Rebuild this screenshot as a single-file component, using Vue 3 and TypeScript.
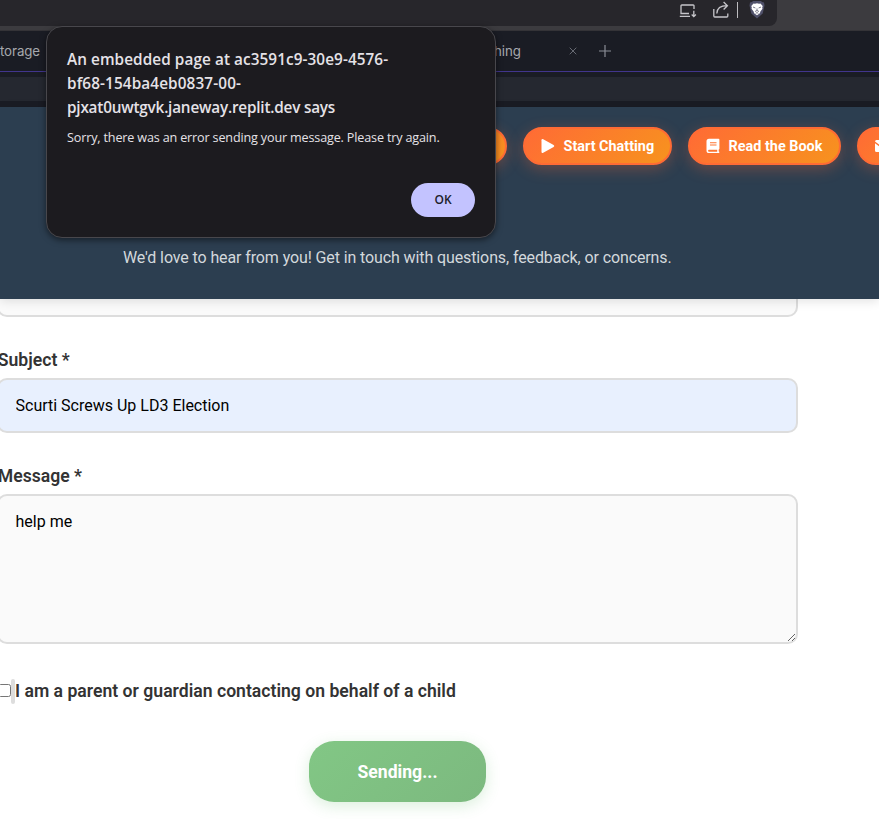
<script setup lang="ts">
import { ref } from 'vue'

const subject = ref('Scurti Screws Up LD3 Election')
const message = ref('help me')
const isParent = ref(false)
const titleLines: string[] = [
  'An embedded page at ac3591c9-30e9-4576-',
  'bf68-154ba4eb0837-00-',
  'pjxat0uwtgvk.janeway.replit.dev says',
]
</script>

<template>
  <div class="window">
    <div class="browser-bar">
      <div class="address">
        <svg class="install" width="18" height="16" viewBox="0 0 18 16" fill="none" stroke="#c6c5ca" stroke-width="1.3">
          <path d="M15 6V2.8Q15 2 14.2 2H2.8Q2 2 2 2.8V10.5H10M.8 13.3H11M14.8 7.8v5.8M12.7 11.5l2.1 2.1 2.1-2.1" />
        </svg>
        <svg class="share" width="18" height="18" viewBox="0 0 18 18" fill="none" stroke="#c6c5ca" stroke-width="1.3">
          <path d="M1.8 8v7q0 1 1 1h12q1 0 1-1v-2.5M4.8 12.5C5 7.5 8 4.7 15 4.7M11.6 1l3.8 3.7-3.8 3.8" />
        </svg>
        <span class="divider"></span>
        <svg class="lion" width="16" height="18" viewBox="0 0 16 18">
          <path fill="#50516a" d="M4 0h8l1 1 2 .5.5 3-1.8 8L8 17.6l-5.700-5.1L.5 4.500 1 1.500 3 1z" />
          <path fill="#fff" d="M4.500 2.400L6 2.800l2-.5 2 .5 1.500-.4L13.700 5l-.5 1.700.3 1.100-2.100 2.700-.5 1.800L8 14.200 5.100 12.300l-.5-1.800-2.100-2.700.3-1.100L2.300 5z" />
          <path fill="none" stroke="#55566b" stroke-width=".8" d="M4 6l2.400 1M12 6L9.600 7M8 7.500v2M6 10.500l2-1 2 1M6.700 12.300L8 11.600l1.300.7" />
        </svg>
      </div>
    </div>

    <div class="tabs">
      <span class="tab first">torage</span>
      <span class="tab second">hing</span>
      <svg class="close" width="8" height="8" viewBox="0 0 8 8" stroke="#686b74" stroke-width="1"><path d="M.7.7l6.600 6.600M7.300.7L.7 7.300" /></svg>
      <svg class="plus" width="12" height="12" viewBox="0 0 12 12" stroke="#8a8d96" stroke-width="1.2"><path d="M6 0v12M0 6h12" /></svg>
    </div>
    <div class="toolstrip"></div>

    <header class="hero">
      <nav class="nav">
        <a class="pill partial"></a>
        <a class="pill chat">
          <svg width="14" height="16" viewBox="0 0 14 16"><path fill="#fff" d="M.5 2.200Q.5.300 2.200 1.200L12.600 7Q14 8 12.600 9L2.200 14.800Q.5 15.700.5 13.800z" /></svg>
          <span>Start Chatting</span>
        </a>
        <a class="pill book">
          <svg width="14" height="16" viewBox="0 0 14 16">
            <path fill="#fff" fill-rule="evenodd" d="M3 .8h9.500q.9 0 .9.900v9q0 .7-.7.900v2h.2q.5 0 .5.700t-.6.700H3Q.5 15 .5 12.400V3.300Q.5.800 3 .8zM4 4.200v1h6.500v-1zM4 6.400v1h6.500v-1zM3 11.700q-.9 0-.9 1t.9 1h8.200v-2z" />
          </svg>
          <span>Read the Book</span>
        </a>
        <a class="pill mail">
          <svg width="16" height="16" viewBox="0 0 16 16"><path fill="#fff" d="M1.500 2h13Q16 2 16 3.500L8 9.500 0 3.500Q0 2 1.500 2zM0 5.200l8 6 8-6v7.300q0 1.500-1.500 1.500h-13Q0 14 0 12.500z" /></svg>
        </a>
      </nav>
      <p class="tagline"><span>We'd love to hear from you! Get in touch with questions, feedback, or concerns.</span></p>
    </header>

    <form class="form" @submit.prevent>
      <div class="field previous"></div>
      <label class="label subject-label" for="subject">Subject *</label>
      <input id="subject" v-model="subject" class="field subject" />
      <label class="label message-label" for="message">Message *</label>
      <textarea id="message" v-model="message" class="field message"></textarea>
      <label class="consent">
        <input v-model="isParent" type="checkbox" class="check" />
        <span class="marker"></span>
        <span class="consent-text">I am a parent or guardian contacting on behalf of a child</span>
      </label>
      <button class="send" type="submit"><span>Sending...</span></button>
    </form>

    <div class="dialog" role="alertdialog">
      <h1 class="title">
        <span v-for="(line, i) in titleLines" :key="line" :class="['line', 'line' + i]">{{ line }}</span>
      </h1>
      <p class="text"><span>Sorry, there was an error sending your message. Please try again.</span></p>
      <button class="ok" type="button">OK</button>
    </div>
  </div>
</template>

<style>
body { margin: 0; background: #fff; }
</style>

<style scoped>
* { box-sizing: border-box; }
.window { position: relative; width: 879px; height: 819px; overflow: hidden; background: #fff; font-family: Roboto, sans-serif; color: #333; }
.browser-bar { height: 31px; background: #3c3b3f; border-bottom: 1px solid #343337; }
.address { display: flex; width: 777px; height: 26px; background: #27262b; border-radius: 0 0 8px 0; padding-left: 678.500px; }
.address svg { flex: none; }
.install { margin-top: 2.500px; }
.share { margin: 1px 0 0 15.500px; }
.divider { width: 1px; height: 16px; margin: 2px 0 0 7px; background: #bdbcc0; flex: none; }
.lion { margin: 1px 0 0 11px; }
.tabs { display: flex; height: 41px; background: #1a1c24; border-bottom: 1px solid #41358c; align-items: center; }
.tab { font: 13.3px/20px Inter, sans-serif; color: #a6a8ad; white-space: nowrap; }
.first { width: 494px; letter-spacing: -.1px; }
.second { width: 74.500px; letter-spacing: -.1px; }
.close { margin-right: 22px; }
.toolstrip { height: 35px; background: #252830; border-top: 5px solid #1a1c24; border-bottom: 6px solid #1a1c24; }
.hero { position: relative; z-index: 1; height: 192px; padding-top: 20px; background: #2c3e50; box-shadow: 0 2px 10px rgba(0, 0, 0, .12); }
.nav { display: flex; gap: 16px; margin-left: 407px; width: 600px; }
.pill { flex: none; display: flex; align-items: center; height: 38px; border: 2px solid #ff6b35; border-radius: 19px; background: linear-gradient(135deg, #ff6b35, #f7931e); box-shadow: 0 4px 15px rgba(255, 107, 53, .3); color: #fff; font-size: 14.400px; font-weight: 700; white-space: nowrap; padding-left: 16px; }
.pill span { margin-left: 8.600px; }
.partial { width: 100px; }
.chat { width: 149px; }
.book { width: 153px; }
.mail { width: 120px; }
.tagline { margin: 81px 0 0 123px; font-size: 16px; line-height: 24px; letter-spacing: -.11px; color: #d3d8dc; white-space: nowrap; }
.form { display: flex; flex-direction: column; align-items: flex-start; margin-left: -3px; }
.field { width: 801px; border: 2px solid #ddd; border-radius: 10px; background: #fafafa; }
.previous { height: 54px; margin-top: -36px; flex: none; }
.label { font-size: 17.600px; line-height: 24px; font-weight: 600; padding-left: .8px; }
.subject-label, .message-label { margin-top: 31px; }
.subject { height: 55px; margin-top: 6px; padding: 0 16.500px; background: #e8f0fe; font: 16px/24px Roboto, sans-serif; color: #000; }
.message { display: block; height: 150px; margin-top: 6px; padding: 14px 16.500px; font: 16px/24px Roboto, sans-serif; color: #000; resize: vertical; outline: none; }
.consent { display: flex; align-items: center; height: 26px; margin-top: 34px; white-space: nowrap; }
.check { width: 13px; height: 13px; margin: 0 0 2px 1px; flex: none; }
.marker { width: 4px; height: 25px; background: #ddd; border-radius: 2px; }
.consent-text { font-size: 17.600px; font-weight: 600; line-height: 24px; letter-spacing: .01px; }
.send { width: 177px; height: 61px; margin: 37px 0 0 312px; padding: 0; border: 0; border-radius: 25px; background: linear-gradient(135deg, #82c785, #7cb97f); box-shadow: 0 4px 15px rgba(76, 175, 80, .2); color: #fff; font: 700 17.600px/24px Roboto, sans-serif; }
.dialog { position: absolute; z-index: 2; left: 46px; top: 26px; width: 450px; height: 212px; padding: 20px 20px 0; border: 1px solid #48474c; border-radius: 16px; background: #1c1b1f; box-shadow: 0 2px 6px rgba(0, 0, 0, .5); color: #e5e2e7; font-family: "Open Sans", "Noto Sans", sans-serif; }
.title { margin: 0; font-size: 15.300px; line-height: 24px; font-weight: 600; }
.line { display: block; width: max-content; }
.line0 { letter-spacing: .08px; }
.line1 { letter-spacing: .12px; }
.line2 { letter-spacing: -.2px; }
.text { margin: 9px 0 0; font-size: 12.600px; line-height: 20px; letter-spacing: -.16px; white-space: nowrap; }
.ok { display: block; width: 64px; height: 34px; margin: 35px 0 0 344px; padding: 0; border: 0; border-radius: 17px; background: #c3c3ff; color: #20202a; font: 600 12px/20px "Open Sans", sans-serif; }
</style>
